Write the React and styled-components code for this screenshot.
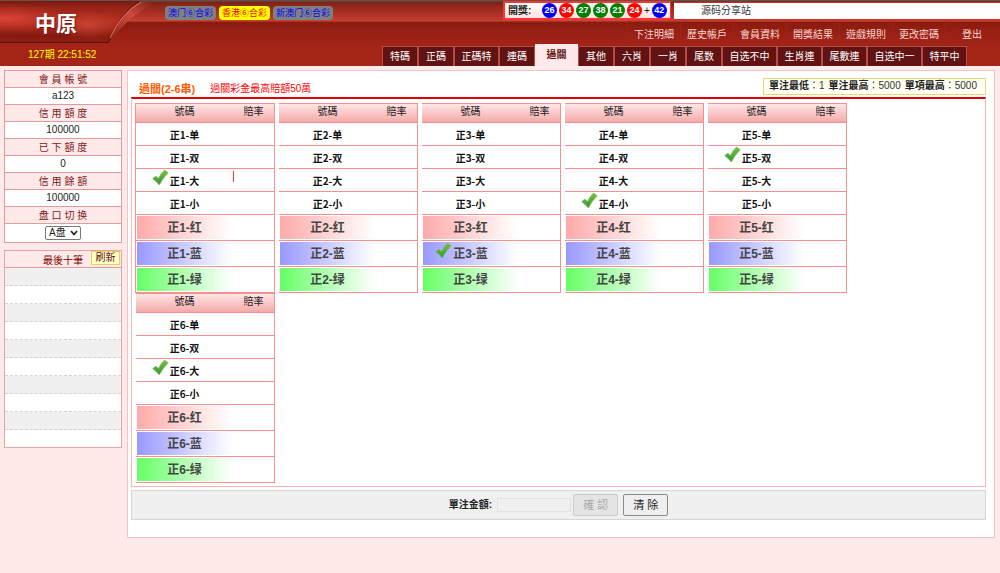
import React, { useState } from "react";
import styled, { createGlobalStyle } from "styled-components";

const cjk = `"Liberation Sans", "Noto Sans CJK TC", "Noto Sans CJK SC", sans-serif`;

const Global = createGlobalStyle`
  * { box-sizing: border-box; }
  body {
    margin: 0;
    background: #ffe9e9;
    color: #333;
    font-family: ${cjk};
    font-size: 10px;
    line-height: 14px;
  }
  a { color: inherit; text-decoration: none; }
  button, input, select { font: inherit; margin: 0; }
`;

/* ---------- header ---------- */
const Header = styled.header`
  display: flex;
  height: 66px;
  background:
    linear-gradient(#62504b 0 1px, #7c2316 2px, #9f2c1f 10px, #c03c2e 20px, #c9493a 21px, #8e1c10 22px, #8c1c10 24px, #a02217 40px, #a52517 50px, #a52517 100%);
`;

const Brand = styled.div`
  flex: 0 0 162px;
  display: flex;
  flex-direction: column;
`;

const Logo = styled.h1`
  position: relative;
  height: 43px;
  margin: 0;
  padding: 3px 50px 0 0;
  color: #fff;
  font-size: 21px;
  line-height: 42px;
  font-weight: 700;
  text-align: center;
  svg { position: absolute; left: 0; top: 0; }
  span { position: relative; text-shadow: 1px 1px 1px #6b140b; }
`;

const Clock = styled.div`
  padding: 5px 0 0 28px;
  color: #ff0;
`;

const HeaderMain = styled.div`
  flex: 1;
  min-width: 0;
  display: flex;
  flex-direction: column;
`;

const TopBar = styled.div`
  display: flex;
  height: 22px;
`;

const Lotteries = styled.div`
  flex: 1;
  display: flex;
  align-items: flex-start;
  gap: 3px;
  padding: 6px 0 0 3px;
`;

const Lottery = styled.button`
  height: 14px;
  padding: 0 3px;
  border: 0;
  border-radius: 4px;
  background: ${(p) => (p.$on ? "#ff0" : "#808080")};
  color: ${(p) => (p.$on ? "#f00" : "#00f")};
  font-family: "Noto Sans CJK SC", sans-serif;
  font-size: 9px;
  line-height: 14px;
  white-space: nowrap;
`;

const Draw = styled.div`
  display: flex;
  align-items: center;
  gap: 2px;
  width: 168px;
  height: 19px;
  margin: 1px 3px 0 0;
  padding: 0 3px;
  border: 2px solid #f33;
  border-right-width: 1px;
  background: linear-gradient(#fff, #fde0de);
  color: #222;
  b { width: 32px; }
`;

const Ball = styled.span`
  width: 15px;
  height: 15px;
  border-radius: 50%;
  background: ${(p) => p.$c};
  color: #fff;
  font-size: 9px;
  font-weight: 700;
  line-height: 15px;
  text-align: center;
`;

const Notice = styled.div`
  width: 326px;
  height: 18px;
  margin-top: 2px;
  padding-left: 27px;
  border-bottom: 1px solid #d22;
  border-top: 1px solid #d22;
  background: #fff;
  line-height: 16px;
`;

const Menu = styled.nav`
  display: flex;
  justify-content: flex-end;
  height: 22px;
  padding-right: 2px;
  a {
    width: 53px;
    padding-top: 6px;
    border-left: 1px solid #9a2419;
    color: #fbd5cf;
    text-align: center;
    white-space: nowrap;
  }
`;

const Tabs = styled.nav`
  display: flex;
  align-items: flex-end;
  justify-content: flex-end;
  height: 22px;
  padding-right: 33px;
`;

const tabWidth = { 2: 36, 3: 45, 4: 55 };
const Tab = styled.a`
  width: ${(p) => (p.$on ? 43 : tabWidth[p.$chars])}px;
  height: ${(p) => (p.$on ? 22 : 20)}px;
  border: 1px solid ${(p) => (p.$on ? "#ffe9e9" : "#b74b45")};
  border-bottom: 0;
  background: ${(p) => (p.$on ? "#ffe9e9" : "#611313")};
  && { color: ${(p) => (p.$on ? "#611313" : "#fff")}; }
  font-weight: ${(p) => (p.$on ? 700 : 400)};
  line-height: 20px;
  text-align: center;
  white-space: nowrap;
`;

/* ---------- page ---------- */
const Body = styled.div`
  display: flex;
  align-items: flex-start;
  gap: 5px;
  padding: 4px 5px 35px 4px;
`;

const Sidebar = styled.aside`
  flex: 0 0 118px;
  display: flex;
  flex-direction: column;
  gap: 7px;
`;

const Account = styled.dl`
  margin: 0;
  border: 1px solid #e39a9a;
  background: #fff;
  text-align: center;
`;

const Term = styled.dt`
  height: 17px;
  border-bottom: 1px solid #e39a9a;
  background: #ffe9e9;
  color: #7a1a1a;
  line-height: 17px;
`;

const Value = styled.dd`
  height: 17px;
  margin: 0;
  border-bottom: 1px solid #e39a9a;
  color: #222;
  line-height: 16px;
  &:last-child { height: 18px; border: 0; padding-top: 2px; }
`;

const SelectBox = styled.span`
  position: relative;
  display: inline-block;
  height: 14px;
  vertical-align: top;
  select {
    appearance: none;
    display: block;
    width: 36px;
    height: 14px;
    padding: 0 0 0 3px;
    border: 1px solid #777;
    border-radius: 2px;
    background: #fff;
    color: #222;
    line-height: 12px;
  }
  svg { position: absolute; right: 3px; top: 4px; pointer-events: none; }
`;

const Recent = styled.section`
  border: 1px solid #e3a5a5;
  background: #fff;
`;

const RecentHead = styled.div`
  display: grid;
  grid-template-columns: 1fr auto 1fr;
  height: 17px;
  border-bottom: 1px solid #e39a9a;
  background: #ffe9e9;
  color: #800000;
  h2 { margin: 0; font-size: 10px; font-weight: 400; line-height: 19px; grid-column: 2; }
`;

const Refresh = styled.button`
  justify-self: end;
  width: 29px;
  height: 14px;
  margin-right: 1px;
  padding: 0;
  border: 1px solid #e8cf5a;
  background: #ffffc8;
  color: #611313;
  line-height: 12px;
`;

const RecentList = styled.ul`
  margin: 0;
  padding: 0;
  list-style: none;
  li { height: 18px; border-bottom: 1px dashed #d4d4d4; }
  li:nth-child(odd) { background: #f0f0f0; }
  li:last-child { height: 17px; border: 0; }
`;

const Main = styled.main`
  flex: 1;
  min-width: 0;
  padding: 7px 8px 17px 3px;
  border: 1px solid #f0c4c4;
  background: #fff;
`;

const TitleRow = styled.div`
  display: flex;
  align-items: flex-start;
  height: 19px;
  padding-left: 8px;
  h2 { margin: 0; color: #ff5a00; font-size: 11px; line-height: 22px; }
  p { margin: 0 auto 0 15px; color: #f00; line-height: 22px; }
`;

const Limits = styled.div`
  display: flex;
  gap: 4px;
  height: 17px;
  padding: 0 8px 0 5px;
  border: 1px solid #e8d67a;
  background: #fffff2;
  line-height: 14px;
  b { color: #222; }
`;

const Board = styled.div`
  display: flex;
  flex-wrap: wrap;
  column-gap: 3px;
  align-content: flex-start;
  padding: 4px 3px 3px;
  border: 1px solid #ffb3b3;
  border-top: 2px solid #d00;
`;

const Group = styled.table`
  width: 140px;
  height: 190px;
  border: solid #f78f8f;
  border-width: 0 1px;
  border-left-color: ${(p) => (p.$first ? "#f78f8f" : "#fff")};
  border-collapse: separate;
  border-spacing: 0;
  table-layout: fixed;
  th {
    height: 20px;
    padding: 0 0 2px;
    border: 1px solid #f78f8f;
    border-width: 1px 0;
    background: linear-gradient(#ffe6e6, #f5a9a9);
    color: #222;
    font-weight: 400;
  }
  th:first-child { width: 97px; }
`;

const tints = { red: "#ffaaaa", blue: "#9999ff", green: "#66ff66" };

const Cell = styled.td`
  height: ${(p) => (p.$tint ? 26 : 23)}px;
  padding: ${(p) => (p.$tint ? "1px" : "0 1px")};
  border-bottom: 1px solid #f78f8f;
`;

const Pick = styled.label`
  display: grid;
  grid-template-columns: 1fr auto 1fr;
  height: ${(p) => (p.$tint ? 23 : 22)}px;
  background: ${(p) => (p.$tint ? `linear-gradient(90deg, ${tints[p.$tint]}, #fff)` : "none")};
  color: ${(p) => (p.$tint ? "#444" : "#111")};
  font-family: ${(p) => (p.$tint ? cjk : `"Noto Sans CJK SC", sans-serif`)};
  font-size: ${(p) => (p.$tint ? 12 : 10)}px;
  font-weight: 700;
  line-height: 24px;
  white-space: nowrap;
  cursor: pointer;
  input {
    grid-area: 1 / 1;
    width: 17px;
    height: 17px;
    appearance: none;
    justify-self: end;
  }
  svg { grid-area: 1 / 1; justify-self: end; margin-right: 1px; pointer-events: none; }
  span { grid-area: 1 / 2; }
`;

const Odds = styled.td`
  padding: 0;
  border-bottom: 1px solid #f78f8f;
`;

const Caret = styled.i`
  display: block;
  width: 1px;
  height: 11px;
  margin-bottom: 8px;
  background: #f33;
`;

const BetBar = styled.form`
  display: flex;
  align-items: center;
  justify-content: center;
  height: 30px;
  margin-top: 3px;
  border: 1px solid #d6d6d6;
  background: #f0f0f0;
  label { color: #222; font-weight: 700; margin-right: 5px; }
  input {
    width: 74px;
    height: 14px;
    margin-right: 2px;
    padding: 0 2px;
    border: 1px solid #e2e2e2;
    background: #f0f0f0;
  }
`;

const Button = styled.button`
  width: 45px;
  height: 22px;
  margin-right: 5px;
  padding: 0;
  border: 1px solid #8a8a8a;
  border-radius: 2px;
  background: #efefef;
  color: #222;
  font-size: 11px;
  line-height: 20px;
  &:disabled { border-color: #ccc; background: #e4e4e4; color: #aaa; }
  &:last-child { margin-right: 0; }
`;

const LogoArt = () => (
  <svg width="162" height="66" viewBox="0 0 162 66" aria-hidden="true">
    <defs>
      <linearGradient id="gloss" x1="0" y1="0" x2="0" y2="1">
        <stop offset="0" stopColor="#7a1a10" />
        <stop offset=".2" stopColor="#9c2518" />
        <stop offset=".5" stopColor="#b5301f" />
        <stop offset=".65" stopColor="#a3281b" />
        <stop offset=".85" stopColor="#86190f" />
        <stop offset="1" stopColor="#8f2016" />
      </linearGradient>
      <radialGradient id="shine" gradientUnits="userSpaceOnUse" cx="0" cy="0" r="1" gradientTransform="translate(5 18) scale(70 15)">
        <stop offset="0" stopColor="#e8483f" stopOpacity=".8" />
        <stop offset="1" stopColor="#c03a2e" stopOpacity="0" />
      </radialGradient>
      <radialGradient id="glow" gradientUnits="userSpaceOnUse" cx="0" cy="0" r="1" gradientTransform="translate(88 25) scale(36 15)">
        <stop offset="0" stopColor="#d2483a" stopOpacity=".8" />
        <stop offset="1" stopColor="#c03a2e" stopOpacity="0" />
      </radialGradient>
      <linearGradient id="sweep" x1="1" y1="0" x2="0" y2="1">
        <stop offset="0" stopColor="#7a1a10" />
        <stop offset=".45" stopColor="#cf4a3c" />
        <stop offset="1" stopColor="#8c1b11" />
      </linearGradient>
    </defs>
    <path d="M141 2H160Q131 12 110 42H108Q119 12 141 2Z" fill="url(#sweep)" />
    <path d="M0 1H141Q120 12 108 42H0Z" fill="url(#gloss)" />
    <path d="M0 1H141Q120 12 108 42H0Z" fill="url(#shine)" />
    <path d="M0 1H141Q120 12 108 42H0Z" fill="url(#glow)" />
    <path d="M0 42.500H108Q120 12 140 1.500" fill="none" stroke="#5e0f08" />
    <path d="M110 38Q121 13 141 2" fill="none" stroke="#d88075" />
  </svg>
);

const Check = () => (
  <svg width="17" height="17" viewBox="0 0 17 17" aria-hidden="true">
    <defs>
      <linearGradient id="leaf" x1="0" y1="0" x2="0" y2="1">
        <stop offset="0" stopColor="#7cc242" />
        <stop offset="1" stopColor="#35923a" />
      </linearGradient>
    </defs>
    <path d="M.8 9.800Q2 8 4 7.200L6.400 9.600Q8.800 4.500 12.500 1L16.200 3.800Q10.500 9.500 7.300 16Q4.500 12.500 .8 9.800Z" fill="url(#leaf)" stroke="#7fbf5c" strokeWidth=".8" strokeLinejoin="round" />
  </svg>
);

const balls = [["26", "#00f"], ["34", "#f00"], ["27", "#008000"], ["38", "#008000"], ["21", "#008000"], ["24", "#f00"]];
const menu = ["下注明細", "歷史帳戶", "會員資料", "開獎結果", "遊戲規則", "更改密碼", "登出"];
const tabs = ["特碼", "正碼", "正碼特", "連碼", "過關", "其他", "六肖", "一肖", "尾数", "自选不中", "生肖連", "尾數連", "自选中一", "特平中"];
const account = [["會 員 帳 號", "a123"], ["信 用 額 度", "100000"], ["已 下 額 度", "0"], ["信 用 餘 額", "100000"]];
const options = [["单"], ["双"], ["大"], ["小"], ["红", "red"], ["蓝", "blue"], ["绿", "green"]];

export default function App() {
  const [picked, setPicked] = useState(["1大", "3蓝", "4小", "5双", "6大"]);
  const choose = (n, name) =>
    setPicked((all) => [...all.filter((k) => k[0] !== String(n)), n + name]);

  return (
    <>
      <Global />
      <Header>
        <Brand>
          <Logo><LogoArt /><span>中原</span></Logo>
          <Clock>127期 22:51:52</Clock>
        </Brand>
        <HeaderMain>
          <TopBar>
            <Lotteries>
              <Lottery>澳门⑥合彩</Lottery>
              <Lottery $on>香港⑥合彩</Lottery>
              <Lottery>新澳门⑥合彩</Lottery>
            </Lotteries>
            <Draw>
              <b>開獎:</b>
              {balls.map(([n, c]) => <Ball key={n} $c={c}>{n}</Ball>)}
              <span>+</span>
              <Ball $c="#00f">42</Ball>
            </Draw>
            <Notice>源码分享站</Notice>
          </TopBar>
          <Menu>{menu.map((m) => <a href="#" key={m}>{m}</a>)}</Menu>
          <Tabs>
            {tabs.map((t) => <Tab href="#" key={t} $chars={t.length} $on={t === "過關"}>{t}</Tab>)}
          </Tabs>
        </HeaderMain>
      </Header>
      <Body>
        <Sidebar>
          <Account>
            {account.map(([k, v]) => (
              <React.Fragment key={k}><Term>{k}</Term><Value>{v}</Value></React.Fragment>
            ))}
            <Term><label htmlFor="plate">盘 口 切 换</label></Term>
            <Value>
              <SelectBox>
                <select id="plate"><option>A盘</option></select>
                <svg width="8" height="6" viewBox="0 0 8 6"><path d="M1 1L4 4.500L7 1" fill="none" stroke="#222" strokeWidth="1.600" /></svg>
              </SelectBox>
            </Value>
          </Account>
          <Recent>
            <RecentHead><h2>最後十筆</h2><Refresh>刷新</Refresh></RecentHead>
            <RecentList>{Array.from({ length: 10 }, (_, i) => <li key={i} />)}</RecentList>
          </Recent>
        </Sidebar>
        <Main>
          <TitleRow>
            <h2>過關(2-6串)</h2>
            <p>過關彩金最高賠額50萬</p>
            <Limits>
              <span><b>單注最低</b>：1</span>
              <span><b>單注最高</b>：5000</span>
              <span><b>單項最高</b>：5000</span>
            </Limits>
          </TitleRow>
          <Board>
            {[1, 2, 3, 4, 5, 6].map((n) => (
              <Group key={n} $first={n === 1}>
                <thead><tr><th>號碼</th><th>賠率</th></tr></thead>
                <tbody>
                  {options.map(([name, tint]) => {
                    const on = picked.includes(n + name);
                    return (
                      <tr key={name}>
                        <Cell $tint={tint}>
                          <Pick $tint={tint}>
                            <input type="checkbox" checked={on} onChange={() => choose(n, name)} />
                            {on && <Check />}
                            <span>正{n}-{name}</span>
                          </Pick>
                        </Cell>
                        <Odds>{n === 1 && name === "大" && <Caret />}</Odds>
                      </tr>
                    );
                  })}
                </tbody>
              </Group>
            ))}
          </Board>
          <BetBar onSubmit={(e) => e.preventDefault()}>
            <label htmlFor="amount">單注金額:</label>
            <input id="amount" disabled />
            <Button disabled>確 認</Button>
            <Button type="button" onClick={() => setPicked([])}>清 除</Button>
          </BetBar>
        </Main>
      </Body>
    </>
  );
}
